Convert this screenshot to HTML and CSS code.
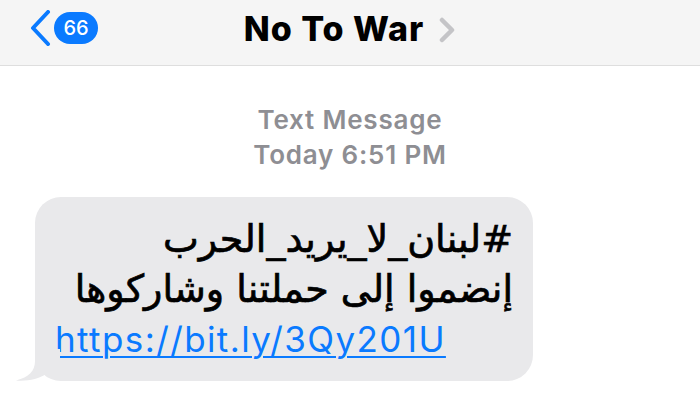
FILE: index.html
```html
<!DOCTYPE html>
<html lang="en">
<head>
<meta charset="utf-8">
<title>No To War</title>
<link rel="stylesheet" href="styles.css">
</head>
<body>
<header class="nav">
  <div class="back">
    <svg class="back-chev" width="22" height="36" viewBox="0 0 22 36"><path d="M19 2 L4 18 L19 34" fill="none" stroke="#0a7aff" stroke-width="4" stroke-linecap="round" stroke-linejoin="round"/></svg>
    <span class="badge">66</span>
  </div>
  <div class="title">
    <span class="name">No To War</span>
    <svg class="title-chev" width="18" height="26" viewBox="0 0 18 26"><path d="M4 3 L14 13 L4 23" fill="none" stroke="#c4c4c7" stroke-width="4.5" stroke-linecap="round" stroke-linejoin="round"/></svg>
  </div>
  <div></div>
</header>
<main class="thread">
  <div class="meta">
    <div class="service">Text Message</div>
    <div class="time">Today 6:51 PM</div>
  </div>
  <div class="bubble">
    <p class="ar" dir="rtl">#لبنان_لا_يريد_الحرب</p>
    <p class="ar" dir="rtl">إنضموا إلى حملتنا وشاركوها</p>
    <p class="lnk"><a href="#">https://bit.ly/3Qy201U</a></p>
    <svg class="tail" width="50" height="32" viewBox="0 0 50 32"><path d="M25 0 L25 12 C25 22 19 28 6 31.5 C17 32.5 29 30 36 25 L50 25 L50 0 Z" fill="#e9e9eb"/></svg>
  </div>
</main>
</body>
</html>
```
FILE: styles.css
```css
* { box-sizing: border-box; }
html, body { margin: 0; padding: 0; background: #ffffff; }
body {
  width: 700px;
  height: 408px;
  overflow: hidden;
  font-family: Inter, "Liberation Sans", sans-serif;
  color: #000;
}
.nav {
  height: 66px;
  background: #f5f5f5;
  border-bottom: 1px solid #dedede;
  display: grid;
  grid-template-columns: 1fr auto 1fr;
  align-items: start;
}
.back {
  display: flex;
  align-items: center;
  padding: 10px 0 0 29px;
  gap: 3px;
}
.back-chev { display: block; }
.badge {
  background: #0a7aff;
  color: #fff;
  font-size: 20px;
  font-weight: 500;
  height: 32px;
  min-width: 44px;
  border-radius: 16px;
  display: flex;
  align-items: center;
  justify-content: center;
  padding: 0 8px;
}
.title {
  display: flex;
  align-items: center;
  gap: 14px;
  padding-top: 9px;
}
.name {
  font-size: 34px;
  font-weight: 800;
  letter-spacing: 1px;
  line-height: 40px;
}
.title-chev { display: block; margin-top: 2px; }
.thread {
  display: flex;
  flex-direction: column;
  padding-top: 36px;
}
.meta {
  text-align: center;
  color: #8e8e93;
  font-size: 26px;
  font-weight: 600;
  letter-spacing: 0.8px;
  line-height: 35px;
}
.bubble {
  position: relative;
  margin: 25px 0 0 35px;
  width: 498px;
  background: #e9e9eb;
  border-radius: 26px;
  padding: 17px 20px 16px 20px;
}
.ar {
  margin: 0;
  font-family: "DejaVu Sans", sans-serif;
  font-size: 38px;
  line-height: 50px;
  text-align: right;
  -webkit-text-stroke: 0.7px #000;
}
.lnk {
  margin: 0;
  font-size: 35px;
  letter-spacing: 1.4px;
  line-height: 51px;
}
.lnk a {
  color: #0a7aff;
  text-decoration: underline;
  text-decoration-thickness: 2px;
  text-underline-offset: 4px;
}
.tail {
  position: absolute;
  left: -25px;
  bottom: 0;
  display: block;
}
```
